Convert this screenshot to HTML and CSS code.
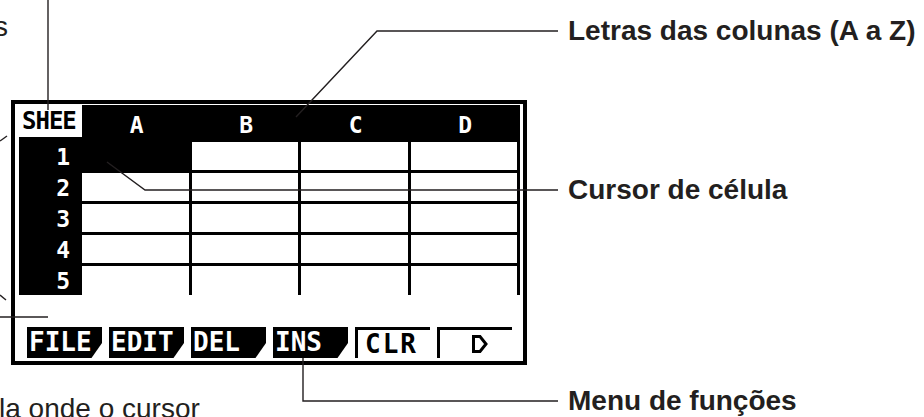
FILE: index.html
```html
<!DOCTYPE html>
<html lang="pt-BR">
<head>
    <meta charset="UTF-8">
    <meta name="viewport" content="width=device-width, initial-scale=1.0">
    <title>Planilha - tela</title>
    <link rel="stylesheet" href="styles.css">
</head>
<body>
    <div class="page">
        <div class="screen">
            <div class="sheet">
                <div class="corner">SHEE</div>
                <div class="col-head">A</div>
                <div class="col-head">B</div>
                <div class="col-head">C</div>
                <div class="col-head">D</div>

                <div class="row-num">1</div>
                <div class="cell cursor"></div>
                <div class="cell"></div>
                <div class="cell"></div>
                <div class="cell"></div>

                <div class="row-num">2</div>
                <div class="cell"></div>
                <div class="cell"></div>
                <div class="cell"></div>
                <div class="cell"></div>

                <div class="row-num">3</div>
                <div class="cell"></div>
                <div class="cell"></div>
                <div class="cell"></div>
                <div class="cell"></div>

                <div class="row-num">4</div>
                <div class="cell"></div>
                <div class="cell"></div>
                <div class="cell"></div>
                <div class="cell"></div>

                <div class="row-num">5</div>
                <div class="cell last"></div>
                <div class="cell last"></div>
                <div class="cell last"></div>
                <div class="cell last"></div>
            </div>

            <div class="menu">
                <span class="tab dark">FILE</span>
                <span class="tab dark">EDIT</span>
                <span class="tab dark">DEL</span>
                <span class="tab dark">INS</span>
                <span class="tab open">CLR</span>
                <span class="tab open arrow">
                    <svg width="16" height="18" viewBox="0 0 16 18">
                        <path d="M1.5 1.5 H8 L14 9 L8 16.5 H1.5 Z" fill="none" stroke="#000" stroke-width="3"/>
                    </svg>
                </span>
            </div>
        </div>

        <!-- linhas de chamada -->
        <svg class="leaders" width="924" height="417" viewBox="0 0 924 417">
            <g fill="none" stroke="#231f20" stroke-width="1.4">
                <path d="M48 0 V110"/>
                <path d="M296 117 L377 31 H558"/>
                <path d="M107 162 L145 190 H558"/>
                <path d="M303 358 V401 H558"/>
                <path d="M0 141 L7 136"/>
                <path d="M0 295 L6 300"/>
                <path d="M0 317 H48"/>
            </g>
        </svg>

        <p class="label cut-top">s</p>
        <p class="label bold letras">Letras das colunas (A a Z)</p>
        <p class="label bold cursor-lbl">Cursor de célula</p>
        <p class="label bold menu-lbl">Menu de funções</p>
        <p class="label cut-bottom">la onde o cursor</p>
    </div>
</body>
</html>
```

FILE: styles.css
```css
body {
    margin: 0;
    padding: 0;
    background: #ffffff;
    font-family: "Liberation Sans", Arial, sans-serif;
}
.page {
    position: relative;
    width: 924px;
    height: 417px;
    overflow: hidden;
    padding-top: 100px;
    padding-left: 11px;
    box-sizing: border-box;
}
.screen {
    width: 516px;
    height: 265px;
    box-sizing: border-box;
    border: 4px solid #000000;
    padding-top: 1px;
    padding-left: 4px;
    font-family: "DejaVu Sans Mono", "Liberation Mono", monospace;
    font-weight: bold;
}
.sheet {
    display: grid;
    grid-template-columns: 63px repeat(4, 1fr);
    grid-template-rows: 37px repeat(4, 31px) 29px;
    width: 501px;
}
.corner {
    box-sizing: border-box;
    border-bottom: 5px solid #000000;
    padding-left: 3px;
    font-size: 24px;
    line-height: 32px;
    letter-spacing: -1px;
    color: #000000;
}
.col-head {
    background: #000000;
    color: #ffffff;
    text-align: center;
    font-size: 23px;
    line-height: 40px;
}
.row-num {
    background: #000000;
    color: #ffffff;
    text-align: right;
    padding-right: 12px;
    font-size: 23px;
    line-height: 31px;
}
.cell {
    box-sizing: border-box;
    border-right: 3px solid #000000;
    border-bottom: 3px solid #000000;
}
.cell.last {
    border-bottom: none;
}
.cell.cursor {
    background: #000000;
}
.menu {
    display: flex;
    gap: 7px;
    margin-top: 32px;
    padding-left: 8px;
}
.tab {
    box-sizing: border-box;
    width: 75px;
    height: 31px;
    font-size: 26px;
    line-height: 31px;
    white-space: nowrap;
}
.tab.dark {
    background: #000000;
    color: #ffffff;
    padding-left: 2px;
    clip-path: polygon(0 0, 100% 0, 100% 52%, 86% 100%, 0 100%);
}
.tab.open {
    border-top: 3px solid #000000;
    border-left: 3px solid #000000;
    color: #000000;
    padding-left: 7px;
    line-height: 28px;
    letter-spacing: 2px;
}
.tab.arrow {
    padding-left: 32px;
    padding-top: 5px;
}
.tab.arrow svg {
    display: block;
}
.leaders {
    position: absolute;
    left: 0;
    top: 0;
}
.label {
    position: absolute;
    margin: 0;
    font-size: 28px;
    line-height: 28px;
    color: #231f20;
    white-space: nowrap;
}
.label.bold {
    font-weight: bold;
    left: 568px;
}
.letras {
    top: 17px;
}
.cursor-lbl {
    top: 176px;
}
.menu-lbl {
    top: 387px;
}
.cut-top {
    left: -6px;
    top: 13px;
}
.cut-bottom {
    left: -1px;
    top: 395px;
}
```
